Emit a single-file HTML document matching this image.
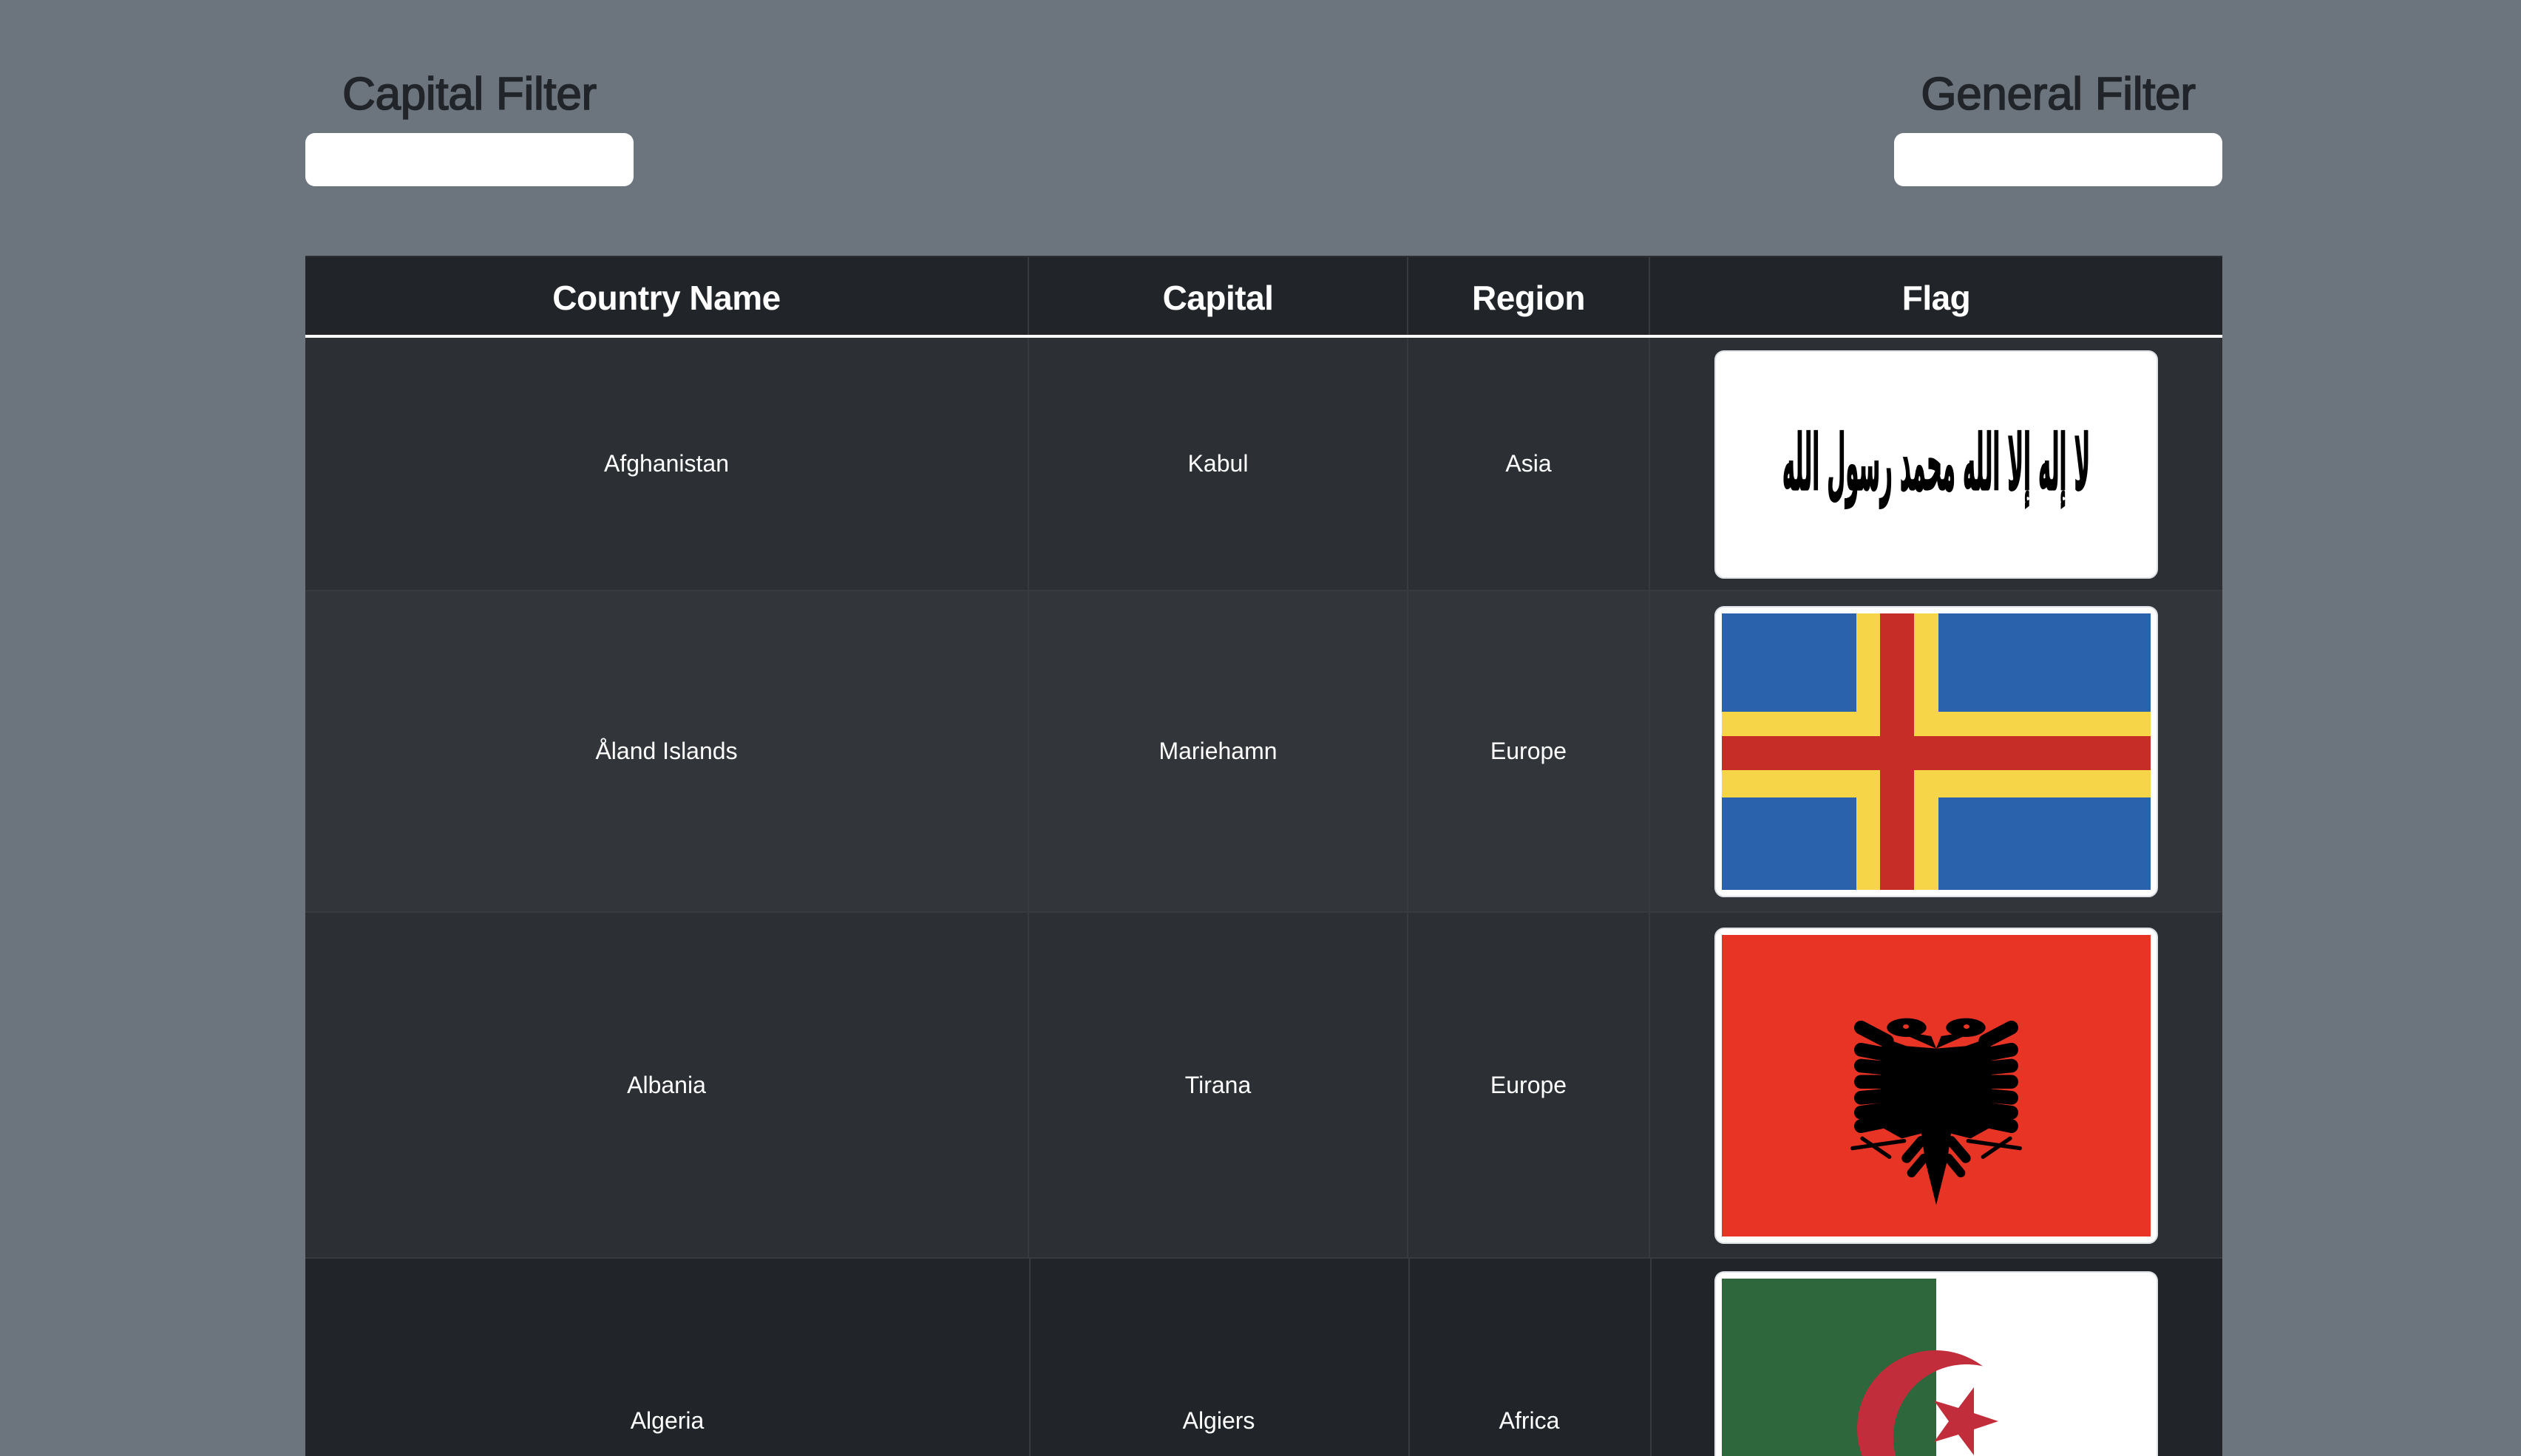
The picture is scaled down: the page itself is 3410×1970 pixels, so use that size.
<!DOCTYPE html>
<html><head><meta charset="utf-8"><style>
*{margin:0;padding:0;box-sizing:border-box}
html{width:3410px;height:1970px;overflow:hidden}
body{width:3410px;height:1970px;background:#6c757d;font-family:"Liberation Sans",Helvetica,Arial,sans-serif;position:relative;overflow:hidden}
.a{position:absolute}
h2{position:absolute;font-weight:normal;-webkit-text-stroke:1.6px #212529;font-size:62px;color:#212529;text-align:center;width:600px;line-height:1;letter-spacing:-0.3px}
.inp{position:absolute;background:#fff;border-radius:13px;height:72px;top:180px;width:444px}
.hd{position:absolute;top:348px;height:105px;background:#212529;color:#fff;font-weight:bold;font-size:46px;display:flex;align-items:center;justify-content:center;border-right:2px solid #373b3e;letter-spacing:-0.5px;padding-top:4px}
.line{position:absolute;left:413px;width:2593px;top:453px;height:4px;background:#fff}
.c{position:absolute;color:#fff;font-size:32px;display:flex;align-items:center;justify-content:center;border-right:2px solid #373b3e;border-bottom:2px solid #373b3e}
.fb{position:absolute;left:2319px;width:600px;background:#fff;border-radius:13px;border:2px solid #dee2e6;padding:8px;overflow:hidden}
</style></head><body>
<h2 style="left:335px;top:97px">Capital Filter</h2>
<div class="inp" style="left:413px"></div>
<h2 style="left:2484px;top:97px">General Filter</h2>
<div class="inp" style="left:2562px"></div>

<div class="a" style="left:413px;top:346px;width:2593px;height:1624px;background:#2c3034"></div>
<div class="hd" style="left:413px;width:979px">Country Name</div>
<div class="hd" style="left:1392px;width:513px">Capital</div>
<div class="hd" style="left:1905px;width:327px">Region</div>
<div class="hd" style="left:2232px;width:774px;border-right:none">Flag</div>
<div class="line"></div>

<div class="c" style="left:413px;top:457px;width:979px;height:343px;background:#2c3034">Afghanistan</div>
<div class="c" style="left:1392px;top:457px;width:513px;height:343px;background:#2c3034">Kabul</div>
<div class="c" style="left:1905px;top:457px;width:327px;height:343px;background:#2c3034">Asia</div>
<div class="c" style="left:2232px;top:457px;width:774px;height:343px;background:#2c3034;border-right:none"></div>

<div class="c" style="left:413px;top:800px;width:979px;height:435px;background:#323539">Åland Islands</div>
<div class="c" style="left:1392px;top:800px;width:513px;height:435px;background:#323539">Mariehamn</div>
<div class="c" style="left:1905px;top:800px;width:327px;height:435px;background:#323539">Europe</div>
<div class="c" style="left:2232px;top:800px;width:774px;height:435px;background:#323539;border-right:none"></div>

<div class="c" style="left:413px;top:1235px;width:979px;height:468px;background:#2c3034">Albania</div>
<div class="c" style="left:1392px;top:1235px;width:513px;height:468px;background:#2c3034">Tirana</div>
<div class="c" style="left:1905px;top:1235px;width:327px;height:468px;background:#2c3034">Europe</div>
<div class="c" style="left:2232px;top:1235px;width:774px;height:468px;background:#2c3034;border-right:none"></div>

<div class="a" style="left:413px;top:1703px;width:2593px;height:267px;background:#212529"></div>
<div class="a" style="left:1392px;top:1703px;width:2px;height:267px;background:#373b3e"></div>
<div class="a" style="left:1905px;top:1703px;width:2px;height:267px;background:#373b3e"></div>
<div class="a" style="left:2232px;top:1703px;width:2px;height:267px;background:#373b3e"></div>
<div class="a" style="left:413px;top:1900px;width:979px;text-align:center;color:#fff;font-size:32px;line-height:44px">Algeria</div>
<div class="a" style="left:1392px;top:1900px;width:513px;text-align:center;color:#fff;font-size:32px;line-height:44px">Algiers</div>
<div class="a" style="left:1905px;top:1900px;width:327px;text-align:center;color:#fff;font-size:32px;line-height:44px">Africa</div>

<div class="fb" style="top:474px;height:309px;display:flex;align-items:center;justify-content:center">
<div style="font-family:'DejaVu Sans',sans-serif;font-weight:bold;font-size:29px;color:#000;direction:rtl;line-height:1;transform:scaleY(3.6);white-space:nowrap;-webkit-text-stroke:0.6px #000">لا إله إلا الله محمد رسول الله</div>
</div>

<div class="fb" style="top:820px;height:394px">
<svg width="580" height="374" viewBox="0 0 580 374" style="display:block"><rect width="580" height="374" fill="#2a63ab"/>
<rect x="182" width="111" height="374" fill="#f7d548"/><rect y="133" width="580" height="116" fill="#f7d548"/>
<rect x="214" width="46" height="374" fill="#c62d27"/><rect y="166" width="580" height="46" fill="#c62d27"/></svg>
</div>

<div class="fb" style="top:1255px;height:428px">
<svg width="580" height="408" viewBox="0 0 580 408" style="display:block"><rect width="580" height="408" fill="#e83424"/>
<g transform="translate(150,72) scale(0.3333)" fill="#000" stroke="#000">
<path stroke="none" d="M200,200 L300,235 L420,245 L540,235 L640,200 L650,560 L560,610 L480,590 L465,700 L420,880 L375,700 L360,590 L280,610 L190,560 Z"/>
<ellipse cx="300" cy="160" rx="80" ry="38" stroke="none"/><ellipse cx="540" cy="160" rx="80" ry="38" stroke="none"/>
<path stroke="none" d="M250,170 L420,245 L400,195 Z M590,170 L420,245 L440,195 Z"/>
<g stroke-width="56" stroke-linecap="round" fill="none">
<path d="M220,215 L115,160"/><path d="M220,270 L115,250"/><path d="M220,325 L115,315"/><path d="M220,380 L115,380"/><path d="M220,435 L115,445"/><path d="M220,490 L115,505"/><path d="M235,535 L115,560"/>
<path d="M620,215 L725,160"/><path d="M620,270 L725,250"/><path d="M620,325 L725,315"/><path d="M620,380 L725,380"/><path d="M620,435 L725,445"/><path d="M620,490 L725,505"/><path d="M605,535 L725,560"/>
<path d="M360,620 L300,690" stroke-width="40"/><path d="M370,690 L320,750" stroke-width="36"/><path d="M480,620 L540,690" stroke-width="40"/><path d="M470,690 L520,750" stroke-width="36"/>
</g>
<g stroke-width="16" fill="none" stroke-linecap="round"><path d="M290,620 L80,650"/><path d="M120,610 L230,685"/><path d="M550,620 L760,650"/><path d="M720,610 L610,685"/></g>
</g>
<ellipse cx="249" cy="124" rx="4" ry="3" fill="#e83424"/><ellipse cx="331" cy="124" rx="4" ry="3" fill="#e83424"/>
</svg>
</div>

<div class="fb" style="top:1720px;height:250px;border-bottom-left-radius:0;border-bottom-right-radius:0;border-bottom:none;padding-bottom:0">
<svg width="580" height="240" viewBox="0 0 580 240" style="display:block">
<defs><mask id="m" maskUnits="userSpaceOnUse" x="0" y="0" width="580" height="400"><rect width="580" height="400" fill="#fff"/><circle cx="331" cy="215" r="99" fill="#000"/></mask></defs>
<rect width="580" height="240" fill="#fff"/><rect width="290" height="240" fill="#2d673b"/>
<circle cx="289" cy="203" r="106" fill="#c12d3b" mask="url(#m)"/>
<g transform="translate(-2329,-1730)">
<path fill="#c12d3b" d="M2703,1923 L2670,1934 L2670,1969 L2649,1941 L2616,1951 L2636,1923 L2616,1895 L2649,1905 L2670,1877 L2670,1912 Z"/>
</g></svg>
</div>
</body></html>
